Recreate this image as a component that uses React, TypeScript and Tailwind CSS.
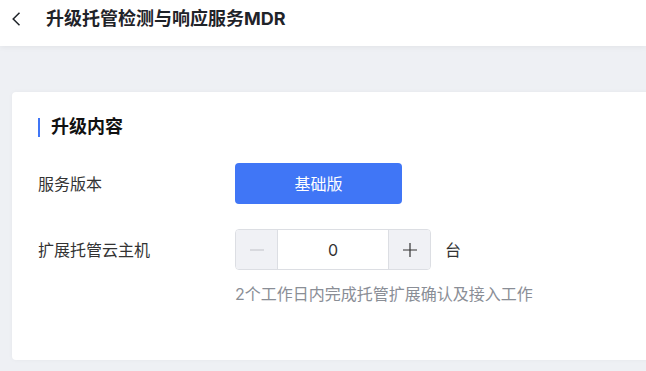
import { useState } from 'react';

const font = { fontFamily: 'Inter, "Noto Sans CJK SC", sans-serif' };

export default function App() {
  const [count, setCount] = useState(0);

  return (
    <div className="w-[646px] h-[371px] overflow-hidden bg-[#eef0f4]" style={font}>
      {/* 顶部栏 */}
      <div className="h-[46px] bg-white flex items-center pb-[8px] shadow-[0_1px_6px_rgba(0,0,0,0.06)] relative">
        <svg className="ml-[11px] w-[10px] h-[14px] text-[#1f2329]" viewBox="0 0 10 14" fill="none">
          <path d="M8.5 0.8 2.2 7 8.5 13.2" stroke="currentColor" strokeWidth="1.5" />
        </svg>
        <h1 className="ml-[25px] text-[18px] leading-6 font-bold text-[#1f2329]">升级托管检测与响应服务MDR</h1>
      </div>

      {/* 内容卡片 */}
      <div className="ml-[12px] mt-[46px] w-[660px] bg-white rounded-[4px] shadow-[0_0_4px_rgba(0,0,0,0.04)] pl-[26px] pt-[25px] pb-[56px]">
        <div className="flex items-center h-5">
          <span className="w-[2px] h-[19px] bg-[#4076f6]" />
          <h2 className="ml-[11px] text-[18px] leading-5 font-bold text-[#111]">升级内容</h2>
        </div>

        <div className="mt-[26px] flex items-center h-[41px]">
          <span className="w-[197px] text-[16px] text-[#333]">服务版本</span>
          <button className="w-[167px] h-[41px] rounded-[4px] bg-[#4076f6] text-white text-[16px]">基础版</button>
        </div>

        <div className="mt-[25px] flex items-center h-[41px]">
          <span className="w-[197px] text-[16px] text-[#333]">扩展托管云主机</span>
          <div className="flex h-[41px] w-[196px] border border-[#dcdee3] rounded-[4px] overflow-hidden">
            <button
              className="w-[42px] bg-[#f0f1f5] flex items-center justify-center border-r border-[#dcdee3]"
              onClick={() => setCount(Math.max(0, count - 1))}
            >
              <svg width="14" height="14" viewBox="0 0 14 14">
                <path d="M0 7h14" stroke="#bfc2c8" strokeWidth="1.2" />
              </svg>
            </button>
            <div className="flex-1 flex items-center justify-center text-[16px] text-[#333]">{count}</div>
            <button
              className="w-[42px] bg-[#f0f1f5] flex items-center justify-center border-l border-[#dcdee3]"
              onClick={() => setCount(count + 1)}
            >
              <svg width="14" height="14" viewBox="0 0 14 14">
                <path d="M0 7h14M7 0v14" stroke="#333" strokeWidth="1.2" />
              </svg>
            </button>
          </div>
          <span className="ml-[14px] text-[16px] text-[#333]">台</span>
        </div>

        <p className="ml-[197px] mt-[14px] text-[16px] leading-5 text-[#8a8e96]">2个工作日内完成托管扩展确认及接入工作</p>
      </div>
    </div>
  );
}
